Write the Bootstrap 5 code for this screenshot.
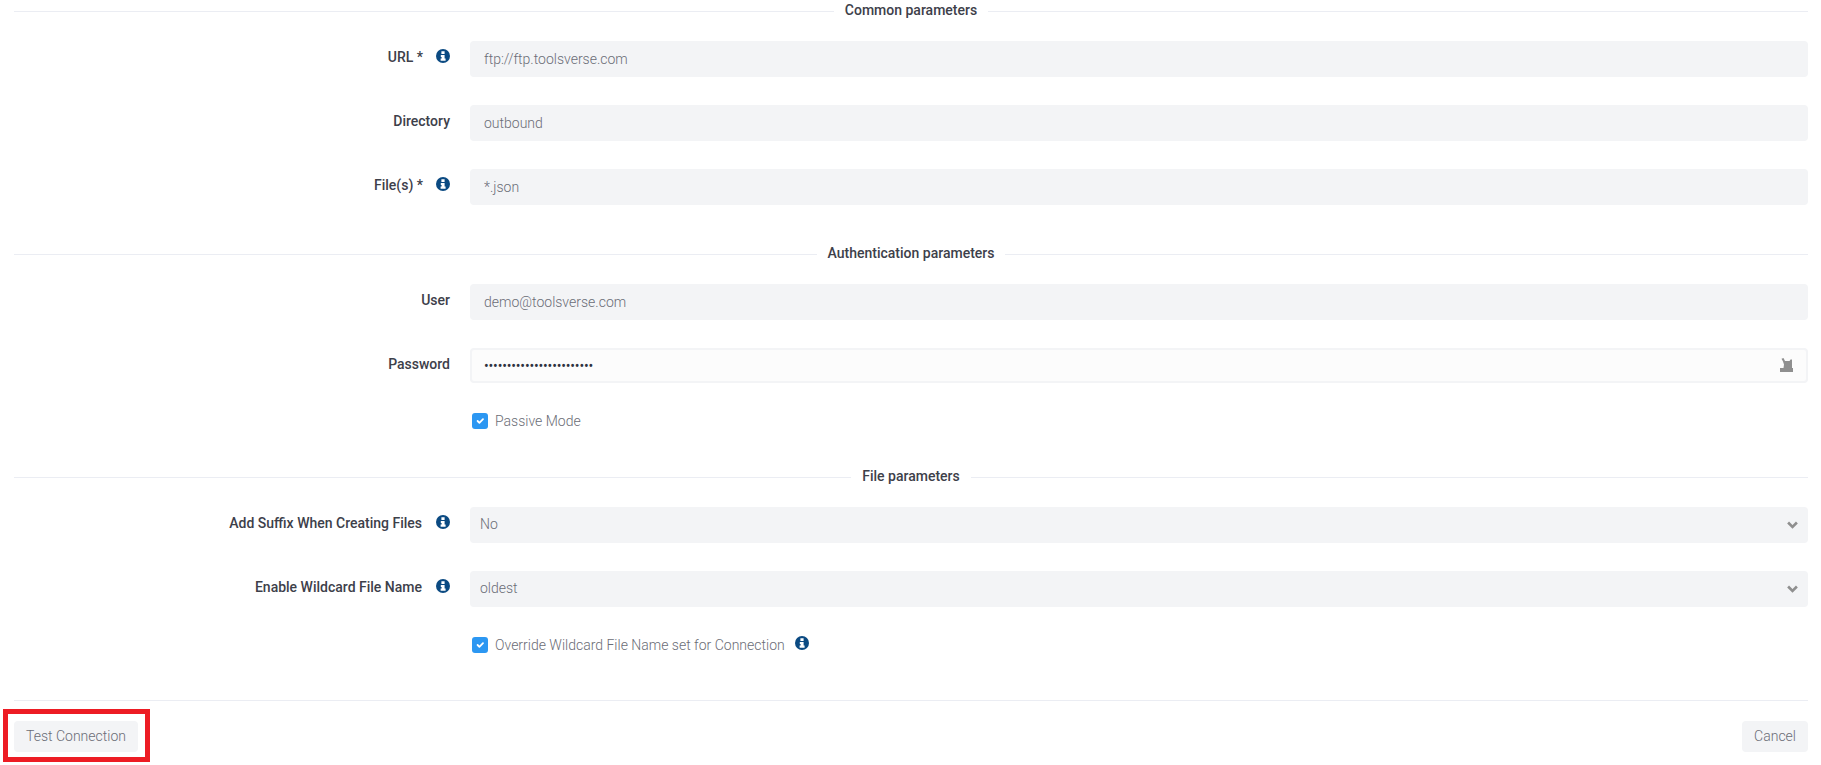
<!DOCTYPE html>
<html lang="en">
<head>
<meta charset="utf-8">
<title>Connection</title>
<link href="https://cdn.jsdelivr.net/npm/bootstrap@5.3.0/dist/css/bootstrap.min.css" rel="stylesheet">
<style>
html,body{height:100%;}
body{font-family:Roboto,"Liberation Sans",sans-serif;font-size:14px;background:#fff;color:#3d404a;overflow:hidden;}
.page-wrap{position:relative;height:765px;padding:0 13px 0 14px;}
.sec-title{height:20px;margin-bottom:21px;display:flex;align-items:center;gap:11px;font-weight:500;font-size:14px;line-height:20px;color:#3d404a;}
.sec-title::before,.sec-title::after{content:"";flex:1 1 0;height:1px;background:#ebedf3;margin-top:3px;}
.sec-gap{margin-top:38px;}
.sec-gap-b{margin-top:37px;}
.field-row{display:flex;height:36px;margin-bottom:28px;}
.lbl-col{flex:0 0 456px;display:flex;justify-content:flex-end;align-items:flex-start;padding:6px 20px 0 0;font-weight:500;line-height:20px;color:#3d404a;}
.lbl-star{margin-right:13px;}
.lbl-info{margin-right:14px;}
.info-ic{width:14px;height:14px;flex:none;display:block;margin-top:2px;}
.in-col{flex:1 1 auto;min-width:0;position:relative;}
.fld.form-control,.fld.form-select{height:36px;border:0;border-radius:4px;background-color:#f3f4f6;font-size:14px;font-weight:300;color:#6b6d76;box-shadow:none;}
.fld.form-control{padding:0 14px;}
.fld.form-select{padding:0 36px 2px 10px;background-image:url("data:image/svg+xml,%3Csvg xmlns='http://www.w3.org/2000/svg' viewBox='0 0 10 7'%3E%3Cpath d='M1 1.2l4 4 4-4' fill='none' stroke='%238f8f8f' stroke-width='2.4'/%3E%3C/svg%3E");background-size:11px 8px;background-position:right 10px center;}
.fld-pass.form-control{height:35px;border:2px solid #f3f4f6;border-radius:4px;background:#fcfcfc;padding:0 40px 0 12px;font-size:14px;letter-spacing:-.18px;color:#2f3240;box-shadow:none;}
.pass-row{height:35px;margin-bottom:30px;}
.eye-ic{position:absolute;right:15px;top:10px;width:13px;height:14px;}
.chk-row{display:flex;align-items:center;height:16px;padding-left:458px;}
.chk-after{margin-top:30px;}
.chk-row .form-check-input{width:16px;height:16px;margin:0 8px 0 0;border:0;border-radius:3px;background-color:#2c97f2;flex:none;background-size:12px;}
.chk-row .chk-txt{margin-left:-1px;}
.chk-txt{font-weight:300;color:#6b6d76;line-height:16px;}
.chk-info{margin:0 0 4px 10px;}
.pg-foot{position:absolute;left:14px;right:13px;top:700px;border-top:1px solid #ebedf3;padding-top:20px;display:flex;justify-content:space-between;}
.foot-btn.btn{height:31px;padding:0 12px;background:#f3f4f6;border:0;border-radius:4px;font-size:14px;font-weight:300;color:#6b6d76;line-height:31px;}
.test-btn.btn{width:124px;padding:0;}
.mark-box{position:absolute;left:3px;top:709px;width:147px;height:53px;border:5px solid #ed1c24;pointer-events:none;}
</style>
</head>
<body>
<svg width="0" height="0" class="position-absolute">
<symbol id="info" viewBox="0 0 14 14">
<circle cx="7" cy="7" r="7" fill="#0b4a82"/>
<path d="M5.400 2.200h3.200v2.700H5.400zM4.800 5.900h3.800v3.700h1v2.100H4.600V9.600h1V7.900h-.8z" fill="#fff"/>
</symbol>
</svg>
<div class="page-wrap">
  <div class="sec-title">Common parameters</div>
  <div class="field-row">
    <div class="lbl-col"><span class="lbl-star">URL *</span><svg class="info-ic"><use href="#info"/></svg></div>
    <div class="in-col"><input class="form-control fld" type="text" value="ftp://ftp.toolsverse.com"></div>
  </div>
  <div class="field-row">
    <div class="lbl-col"><span>Directory</span></div>
    <div class="in-col"><input class="form-control fld" type="text" value="outbound"></div>
  </div>
  <div class="field-row mb-0">
    <div class="lbl-col"><span class="lbl-star">File(s) *</span><svg class="info-ic"><use href="#info"/></svg></div>
    <div class="in-col"><input class="form-control fld" type="text" value="*.json"></div>
  </div>

  <div class="sec-title sec-gap">Authentication parameters</div>
  <div class="field-row">
    <div class="lbl-col"><span>User</span></div>
    <div class="in-col"><input class="form-control fld" type="text" value="demo@toolsverse.com"></div>
  </div>
  <div class="field-row pass-row">
    <div class="lbl-col"><span>Password</span></div>
    <div class="in-col">
      <input class="form-control fld-pass" type="password" value="aaaaaaaaaaaaaaaaaaaaaaaa">
      <svg class="eye-ic" viewBox="0 0 13 14"><path d="M0 10h13v4H0z" fill="#8f8f8f"/><path d="M1.500.8L3.500 0 5 3h2.500L9.500 3 10.500 1.500H12V10H3.500L4 6.500 3 3.500z" fill="#8f8f8f"/></svg>
    </div>
  </div>
  <div class="chk-row">
    <input class="form-check-input" type="checkbox" checked aria-label="Passive Mode">
    <span class="chk-txt">Passive Mode</span>
  </div>

  <div class="sec-title sec-gap-b">File parameters</div>
  <div class="field-row">
    <div class="lbl-col"><span class="lbl-info">Add Suffix When Creating Files</span><svg class="info-ic"><use href="#info"/></svg></div>
    <div class="in-col"><select class="form-select fld" aria-label="Add Suffix"><option>No</option></select></div>
  </div>
  <div class="field-row mb-0">
    <div class="lbl-col"><span class="lbl-info">Enable Wildcard File Name</span><svg class="info-ic"><use href="#info"/></svg></div>
    <div class="in-col"><select class="form-select fld" aria-label="Enable Wildcard"><option>oldest</option></select></div>
  </div>
  <div class="chk-row chk-after">
    <input class="form-check-input" type="checkbox" checked aria-label="Override">
    <span class="chk-txt">Override Wildcard File Name set for Connection</span>
    <svg class="info-ic chk-info"><use href="#info"/></svg>
  </div>

  <div class="pg-foot">
    <button type="button" class="btn foot-btn test-btn">Test Connection</button>
    <button type="button" class="btn foot-btn">Cancel</button>
  </div>
  <div class="mark-box"></div>
</div>
<script src="https://cdn.jsdelivr.net/npm/bootstrap@5.3.0/dist/js/bootstrap.bundle.min.js"></script>
</body>
</html>
